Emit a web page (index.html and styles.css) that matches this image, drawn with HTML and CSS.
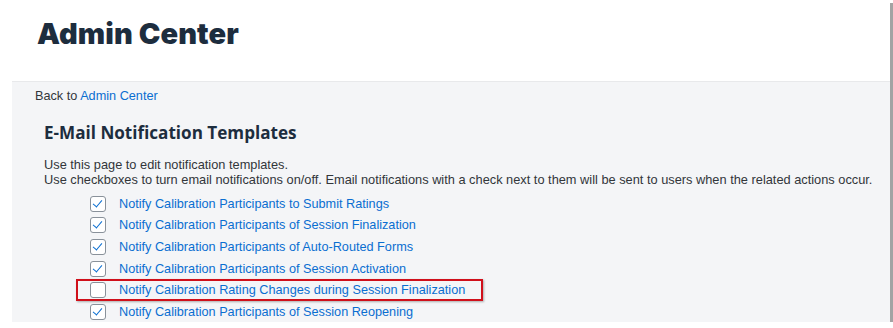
FILE: index.html
```html
<!DOCTYPE html>
<html lang="en">
  <head>
    <meta charset="UTF-8" />
    <title>Admin Center - E-Mail Notification Templates</title>
    <link rel="stylesheet" href="styles.css">
  </head>
  <body>
    <div class="shot">
      <div class="header">
        <h1>Admin Center</h1>
      </div>

      <div class="panel">
        <div class="breadcrumb">Back to <a href="#">Admin Center</a></div>

        <div class="content">
          <h2>E-Mail Notification Templates</h2>
          <p class="intro">
            Use this page to edit notification templates.<br>
            Use checkboxes to turn email notifications on/off. Email notifications with a check next to them will be sent to users when the related actions occur.
          </p>

          <ul class="templates">
            <li><span class="box checked"></span><a href="#">Notify Calibration Participants to Submit Ratings</a></li>
            <li><span class="box checked"></span><a href="#">Notify Calibration Participants of Session Finalization</a></li>
            <li><span class="box checked"></span><a href="#">Notify Calibration Participants of Auto-Routed Forms</a></li>
            <li><span class="box checked"></span><a href="#">Notify Calibration Participants of Session Activation</a></li>
            <li class="marked"><span class="box"></span><a href="#">Notify Calibration Rating Changes during Session Finalization</a></li>
            <li><span class="box checked"></span><a href="#">Notify Calibration Participants of Session Reopening</a></li>
          </ul>
        </div>
      </div>
    </div>
  </body>
</html>
```

FILE: styles.css
```css
body {
  margin: 0;
  background: #fff;
  font-family: "Liberation Sans", Arial, sans-serif;
  color: #32363a;
}

.shot {
  width: 890px;
  height: 322px;
  box-shadow: 3px 3px 0 #a3a3a3;
  overflow: hidden;
  background: #fff;
}

.header {
  height: 81px;
  padding-left: 37px;
  box-sizing: border-box;
}

.header h1 {
  margin: 0;
  padding-top: 16px;
  font-family: Inter, sans-serif;
  font-weight: 900;
  font-size: 29px;
  letter-spacing: 0.1px;
  color: #1d2d3e;
}

.panel {
  margin-left: 12px;
  height: 241px;
  background: #f4f5f7;
  border-top: 1px solid #e8e9eb;
  box-sizing: border-box;
}

a {
  color: #0a6ed1;
  text-decoration: none;
}

.breadcrumb {
  padding: 7px 0 0 23px;
  font-size: 12.7px;
}

.content {
  padding-left: 32px;
}

.content h2 {
  margin: 18px 0 0;
  font-family: "Open Sans", sans-serif;
  font-size: 17.1px;
  font-weight: 700;
  color: #1d2d3e;
}

.intro {
  margin: 13px 0 0;
  font-size: 12.8px;
  line-height: 15px;
}

.templates {
  list-style: none;
  margin: 6px 0 0;
  padding: 0 0 0 46px;
}

.templates li {
  display: flex;
  align-items: center;
  gap: 13px;
  height: 21.6px;
  font-size: 12.7px;
  position: relative;
}

.box {
  width: 14px;
  height: 14px;
  border: 1px solid #89919a;
  border-radius: 3px;
  background: #fff;
  position: relative;
}

.box.checked:after {
  content: "";
  position: absolute;
  left: 4px;
  top: 1px;
  width: 4px;
  height: 8px;
  border-right: 1.3px solid #0a6ed1;
  border-bottom: 1.3px solid #0a6ed1;
  transform: rotate(40deg);
}

/* red frame around the unchecked item */
.templates li.marked:before {
  content: "";
  position: absolute;
  left: -14px;
  top: 0;
  width: 403px;
  height: 18px;
  border: 2px solid #d0101b;
  box-shadow: 1px 1px 2px rgba(0, 0, 0, 0.3);
}
```
